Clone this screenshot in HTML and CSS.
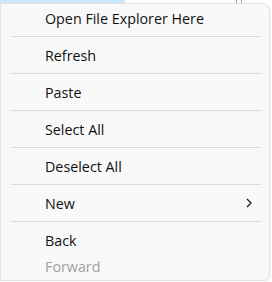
FILE: index.html
```html
<!DOCTYPE html>
<html lang="en">
<head>
    <meta charset="UTF-8">
    <meta name="viewport" content="width=device-width, initial-scale=1.0">
    <title>Context menu</title>
    <link rel="stylesheet" href="styles.css">
</head>
<body>
    <div class="fondo">
        <div class="seleccion"></div>
        <div class="marca marca-1"></div>
        <div class="marca marca-2"></div>
    </div>

    <div class="menu">
        <div class="item">Open File Explorer Here</div>
        <div class="separador"></div>
        <div class="item">Refresh</div>
        <div class="separador"></div>
        <div class="item">Paste</div>
        <div class="separador"></div>
        <div class="item">Select All</div>
        <div class="separador"></div>
        <div class="item">Deselect All</div>
        <div class="separador"></div>
        <div class="item submenu">
            <span>New</span>
            <svg class="flecha" width="6" height="10" viewBox="0 0 6 10">
                <path d="M1 1 L5 5 L1 9" fill="none" stroke="#1a1a1a" stroke-width="1.3"/>
            </svg>
        </div>
        <div class="separador"></div>
        <div class="item">Back</div>
        <div class="item disabled">Forward</div>
    </div>
</body>
</html>
```

FILE: styles.css
```css
body {
    margin: 0;
    padding: 0;
    background-color: #fff;
    font-family: "Open Sans", "Noto Sans", sans-serif;
    overflow: hidden;
}
.fondo {
    position: relative;
    height: 3px;
}
.seleccion {
    width: 125px;
    height: 3px;
    background-color: #cce8ff;
}
.marca {
    position: absolute;
    top: 0;
    width: 1px;
    height: 3px;
    background-color: #a0a0a0;
}
.marca-1 {
    left: 236px;
}
.marca-2 {
    left: 241px;
}
.menu {
    width: 268px;
    background-color: #f9f9f9;
    border: 1px solid #e3e3e3;
    border-radius: 0 8px 7px 0;
    padding: 1px 0;
    box-shadow: 0 1px 3px rgba(0, 0, 0, 0.08);
}
.item {
    height: 26px;
    display: flex;
    align-items: center;
    padding: 0 17px 0 44px;
    font-size: 14.3px;
    color: #111;
}
.submenu {
    justify-content: space-between;
}
.flecha {
    display: block;
}
.disabled {
    color: #9f9f9f;
}
.separador {
    height: 1px;
    background-color: #d9d9d9;
    margin: 5px 8px 5px 10px;
}
```
